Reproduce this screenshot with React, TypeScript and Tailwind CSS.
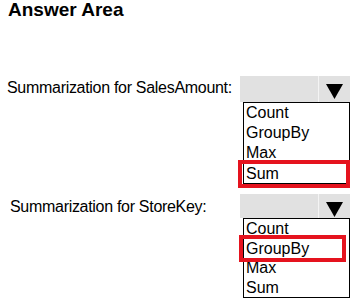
import React from "react";

function Arrow() {
  return (
    <svg width="17" height="15" viewBox="0 0 17 15" className="block">
      <polygon points="0,0 17,0 8.5,15" fill="#000" />
    </svg>
  );
}

function SelectBox({ h }: { h: string }) {
  return (
    <div className={`flex ${h} bg-[#e1e1e1]`}>
      <div className="flex-1" />
      <div className="w-[1px] bg-[#f4f4f4]" />
      <div className="w-[31px] flex justify-center pt-[8px]">
        <Arrow />
      </div>
    </div>
  );
}

export default function App() {
  return (
    <div className="w-[350px] h-[301px] bg-white text-black overflow-hidden font-['Liberation_Sans',Arial,sans-serif]">
      <div className="pl-[8px] text-[19px] font-bold leading-[20px]">Answer Area</div>

      <div className="flex mt-[56px]">
        <div className="w-[240px] pl-[7px] pt-[3px] text-[16px] leading-[18px] tracking-[-0.3px]">
          Summarization for SalesAmount:
        </div>
        <div className="w-[110px] flex flex-col">
          <SelectBox h="h-[26px]" />
          <div className="ml-[3px] border border-black text-[16px] leading-[20px]">
            <div className="h-[20px] pl-[2px]">Count</div>
            <div className="h-[20px] pl-[2px]">GroupBy</div>
            <div className="h-[20px] pl-[2px]">Max</div>
            <div className="relative h-[20px] pl-[2px] border-t border-black leading-[19px]">
              Sum
              <span className="absolute -left-[6px] -top-[4px] -right-[1px] -bottom-[5px] border-[4px] border-[#e5131e]" />
            </div>
          </div>
        </div>
      </div>

      <div className="flex mt-[10px]">
        <div className="w-[240px] pl-[10px] pt-[4px] text-[16px] leading-[18px] tracking-[-0.3px]">
          Summarization for StoreKey:
        </div>
        <div className="w-[110px] flex flex-col">
          <SelectBox h="h-[24px]" />
          <div className="ml-[3px] border border-black text-[16px] leading-[19.5px]">
            <div className="h-[19.5px] pl-[2px]">Count</div>
            <div className="relative h-[19.5px] pl-[2px]">
              GroupBy
              <span className="absolute -left-[5px] -top-[4px] right-[3px] -bottom-[4px] border-[4px] border-[#e5131e]" />
            </div>
            <div className="h-[19.5px] pl-[2px]">Max</div>
            <div className="h-[19.5px] pl-[2px]">Sum</div>
          </div>
        </div>
      </div>
    </div>
  );
}
